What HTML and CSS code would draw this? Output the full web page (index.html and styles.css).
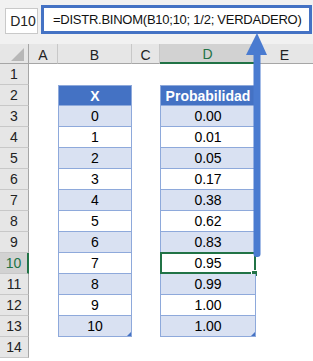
FILE: index.html
```
<!DOCTYPE html>
<html lang="es">
<head>
<meta charset="utf-8">
<link rel="stylesheet" href="styles.css">
</head>
<body>
<div class="page">
  <div class="topbar">
    <div class="namebox">D10</div>
    <div class="formula">=DISTR.BINOM(B10;10; 1/2; VERDADERO)</div>
  </div>
  <div class="sheet">
    <div class="corner"><span class="tri"></span></div>
    <div class="ch">A</div><div class="ch">B</div><div class="ch">C</div><div class="ch sel">D</div><div class="ch last">E</div>

    <div class="rh">1</div><div></div><div></div><div></div><div></div><div></div>
    <div class="rh">2</div><div></div><div class="t th">X</div><div></div><div class="t th">Probabilidad</div><div></div>
    <div class="rh">3</div><div></div><div class="t band">0</div><div></div><div class="t band">0.00</div><div></div>
    <div class="rh">4</div><div></div><div class="t">1</div><div></div><div class="t">0.01</div><div></div>
    <div class="rh">5</div><div></div><div class="t band">2</div><div></div><div class="t band">0.05</div><div></div>
    <div class="rh">6</div><div></div><div class="t">3</div><div></div><div class="t">0.17</div><div></div>
    <div class="rh">7</div><div></div><div class="t band">4</div><div></div><div class="t band">0.38</div><div></div>
    <div class="rh">8</div><div></div><div class="t">5</div><div></div><div class="t">0.62</div><div></div>
    <div class="rh">9</div><div></div><div class="t band">6</div><div></div><div class="t band">0.83</div><div></div>
    <div class="rh sel">10</div><div></div><div class="t">7</div><div></div><div class="t active">0.95</div><div></div>
    <div class="rh">11</div><div></div><div class="t band">8</div><div></div><div class="t band">0.99</div><div></div>
    <div class="rh">12</div><div></div><div class="t">9</div><div></div><div class="t">1.00</div><div></div>
    <div class="rh">13</div><div></div><div class="t band end">10</div><div></div><div class="t band end">1.00</div><div></div>
    <div class="rh">14</div><div></div><div></div><div></div><div></div><div></div>
  </div>
  <svg class="arrow" width="313" height="361" viewBox="0 0 313 361">
    <polygon points="257,33 267,55 246,55" fill="#4a7bd0"/>
    <rect x="253.5" y="50" width="7" height="207" rx="3" fill="#4a7bd0"/>
  </svg>
</div>
</body>
</html>
```
FILE: styles.css
```
html, body {
  margin: 0;
  padding: 0;
  background: #ffffff;
}
.page {
  position: relative;
  width: 313px;
  height: 361px;
  overflow: hidden;
  font-family: "Liberation Sans", Arial, sans-serif;
  color: #000;
}
.topbar {
  height: 44px;
  background: #f1f1f1;
  display: flex;
  align-items: flex-start;
  box-sizing: border-box;
}
.namebox {
  margin: 8px 0 0 5px;
  width: 33px;
  height: 26px;
  box-sizing: border-box;
  border: 1px solid #c9c9c9;
  background: #fff;
  font-size: 14px;
  display: flex;
  align-items: center;
  justify-content: center;
  padding-left: 3px;
  color: #222;
}
.formula {
  margin: 5px 0 0 3px;
  width: 271px;
  height: 29px;
  box-sizing: border-box;
  border: 3px solid #4472c4;
  background: #fff;
  font-size: 13px;
  letter-spacing: -0.25px;
  display: flex;
  align-items: center;
  padding-left: 9px;
  white-space: nowrap;
  color: #111;
}
.sheet {
  display: grid;
  grid-template-columns: 29px 29px 74px 28px 96px 57px;
  grid-template-rows: 20px repeat(14, 21px);
  font-size: 14px;
}
.sheet > div {
  box-sizing: border-box;
  display: flex;
  align-items: center;
  justify-content: center;
  position: relative;
}
.corner {
  background: #e6e6e6;
  border-right: 1px solid #a6a6a6;
  border-bottom: 1px solid #a6a6a6;
}
.tri {
  position: absolute;
  right: 4px;
  bottom: 2px;
  width: 0;
  height: 0;
  border-left: 13px solid transparent;
  border-bottom: 13px solid #b7b7b7;
}
.ch {
  background: #e6e6e6;
  border-right: 1px solid #c8c8c8;
  border-bottom: 1px solid #a6a6a6;
  color: #222;
  padding-top: 2px;
}
.ch.last {
  border-right: none;
}
.ch.sel {
  background: #d2d2d2;
  color: #217346;
  border-bottom: 2px solid #217346;
}
.rh {
  background: #e6e6e6;
  border-right: 1px solid #a6a6a6;
  border-bottom: 1px solid #c8c8c8;
  color: #222;
}
.rh.sel {
  background: #d2d2d2;
  color: #217346;
  border-right: 2px solid #217346;
}
.t {
  border-left: 1px solid #8ea9db;
  border-right: 1px solid #8ea9db;
  border-bottom: 1px solid #8ea9db;
  background: #fff;
}
.band {
  background: #d9e1f2;
}
.th {
  background: #4472c4;
  color: #fff;
  font-weight: bold;
  border-top: 1px solid #8ea9db;
}
.end::after {
  content: "";
  position: absolute;
  right: 0;
  bottom: 0;
  border-left: 4px solid transparent;
  border-bottom: 4px solid #4472c4;
}
.active::before {
  content: "";
  position: absolute;
  left: -1px;
  top: -1px;
  right: -1px;
  bottom: -1px;
  border: 2px solid #217346;
}
.active::after {
  content: "";
  position: absolute;
  right: -3px;
  bottom: -4px;
  width: 5px;
  height: 5px;
  background: #217346;
  border: 1px solid #fff;
}
.arrow {
  position: absolute;
  left: 0;
  top: 0;
  pointer-events: none;
}
```
